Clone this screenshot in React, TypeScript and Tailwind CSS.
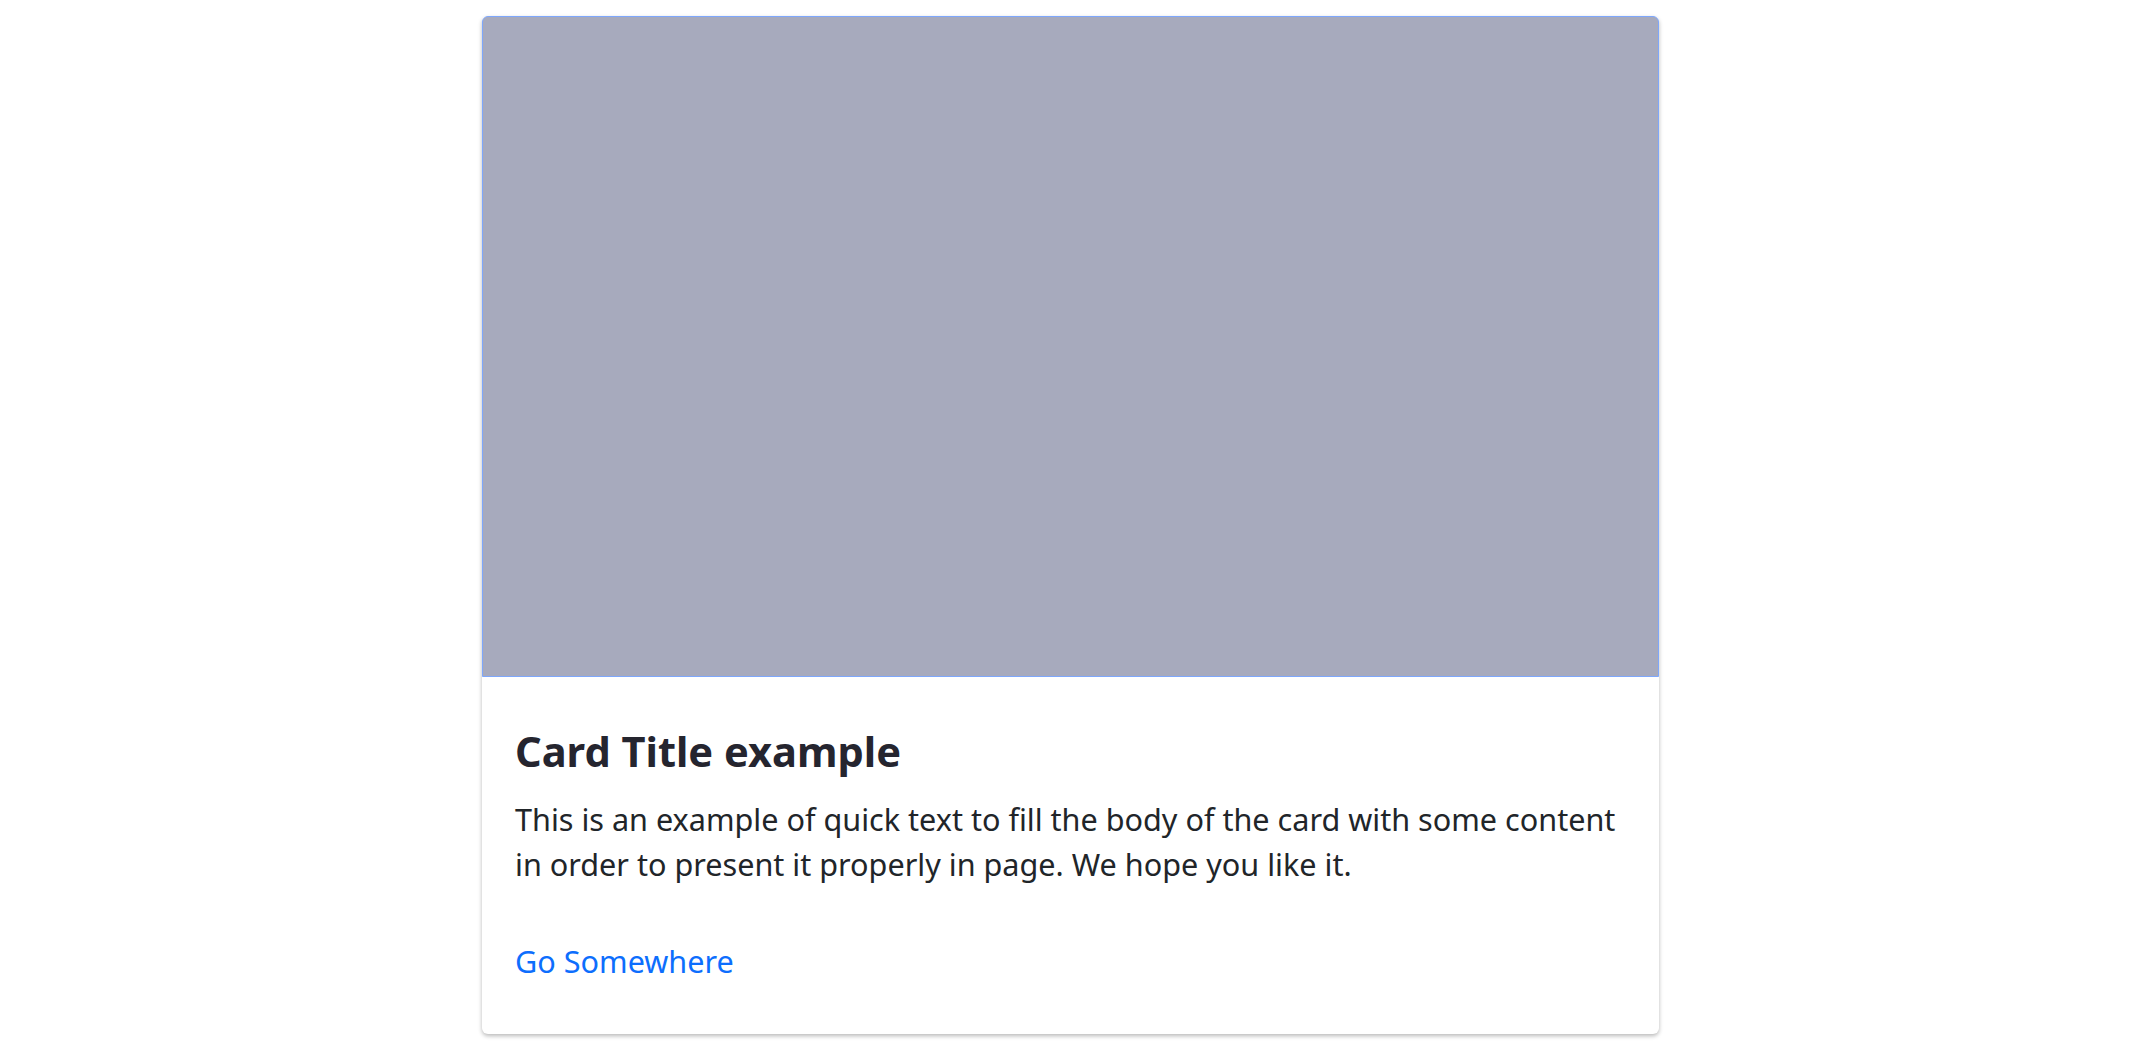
import React from "react";

export default function App() {
  return (
    <div className="min-h-[1051px] w-full bg-white pt-[16px]" style={{ fontFamily: '"Noto Sans", "Open Sans", sans-serif' }}>
      <div className="ml-[482px] w-[1177px] rounded-[6px] bg-white shadow-[0_2px_4px_rgba(0,0,0,0.28)]">
        <div className="h-[661px] rounded-t-[6px] border border-[#7ea7fc] bg-[#a7aabd]" />
        <div className="px-[33px] pb-[50px] pt-[50px]">
          <h5 className="text-[41.6px] font-bold leading-[49px] text-[#25252f]">Card Title example</h5>
          <p className="mt-[21px] text-[30.6px] leading-[45px] text-[#212529]">
            This is an example of quick text to fill the body of the card with some content in order to present it properly in page. We hope you like it.
          </p>
          <a href="#" className="mt-[52px] block text-[30.6px] leading-[45px] text-[#0d6efd]">Go Somewhere</a>
        </div>
      </div>
    </div>
  );
}
